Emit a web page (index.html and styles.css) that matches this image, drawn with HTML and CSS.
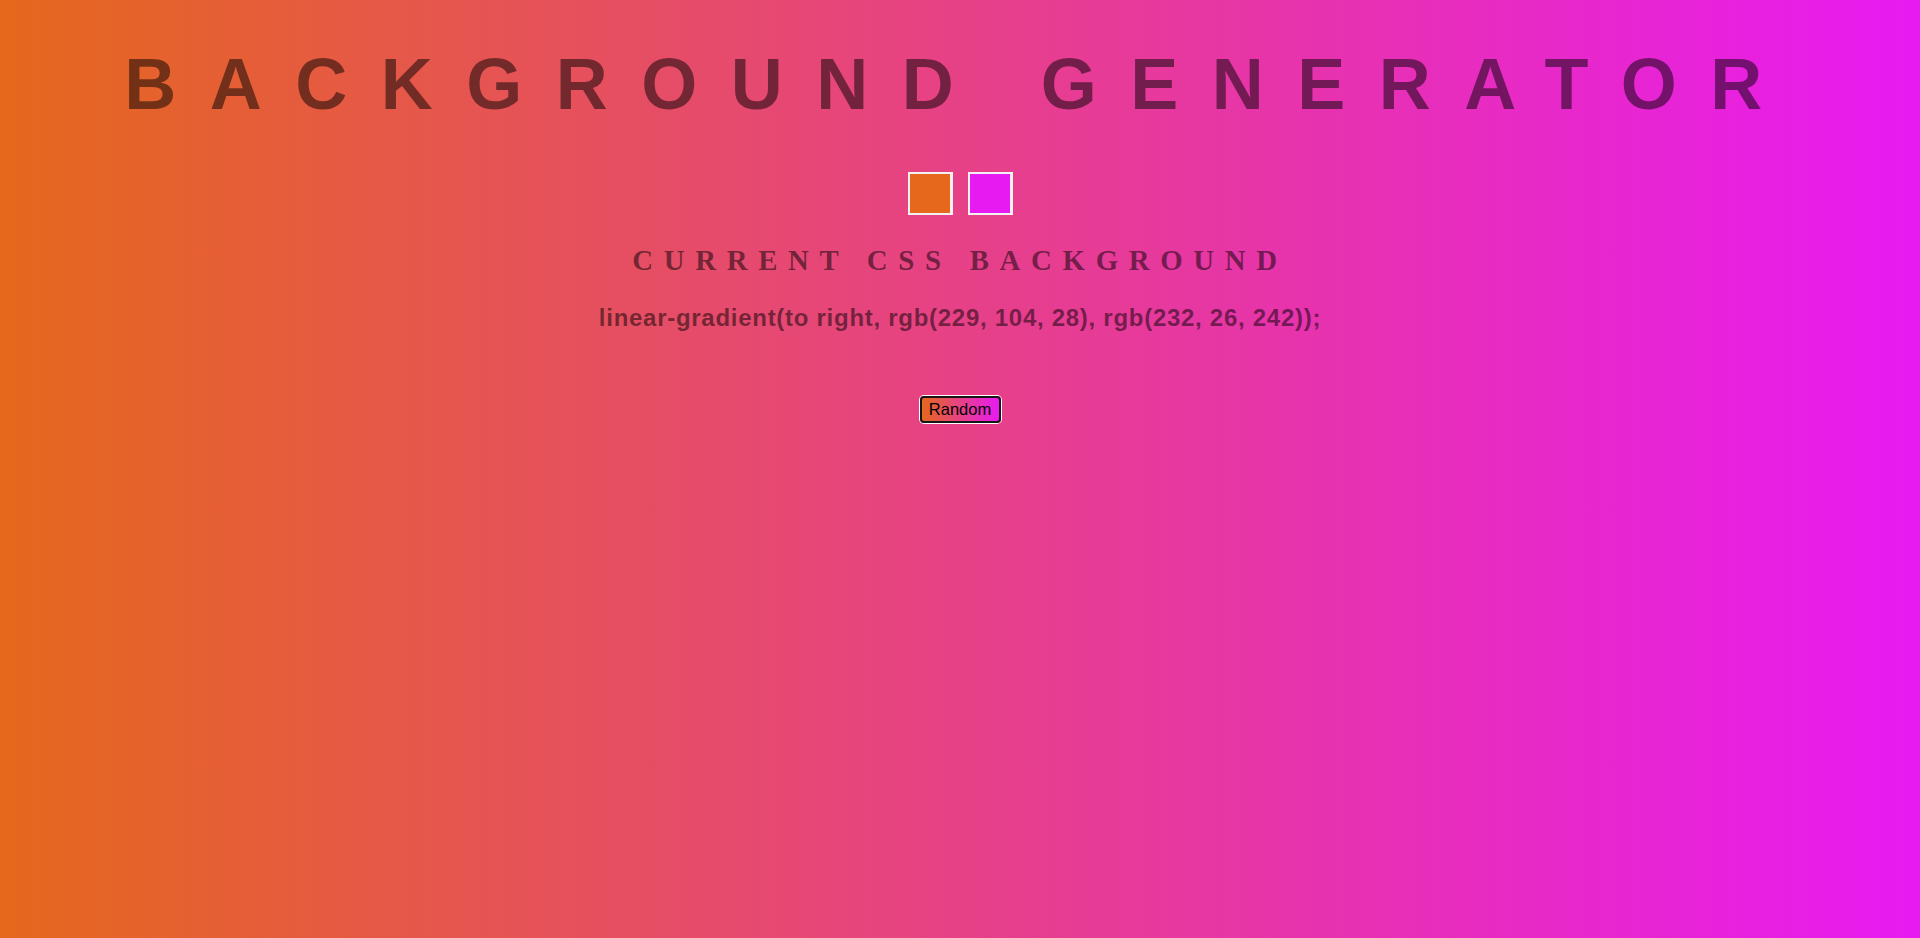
FILE: index.html
```html
<!DOCTYPE html>
<html lang="en">
<head>
<meta charset="utf-8">
<title>Background Generator</title>
<link rel="stylesheet" href="styles.css">
</head>
<body>
<main class="page">
  <h1 class="title">Background Generator</h1>
  <div class="pickers">
    <input class="picker" type="color" name="color1" value="#e5681c">
    <input class="picker" type="color" name="color2" value="#e81af2">
  </div>
  <h3 class="subtitle">Current CSS Background</h3>
  <p class="css-value">linear-gradient(to right, rgb(229, 104, 28), rgb(232, 26, 242));</p>
  <button class="random-btn" type="button">Random</button>
</main>
</body>
</html>
```
FILE: styles.css
```css
html {
  height: 100%;
}

body {
  margin: 0;
  min-height: 100%;
  background: linear-gradient(to right, rgb(229, 104, 28), rgb(232, 26, 242));
  color: rgba(0, 0, 0, 0.5);
  font-family: "Liberation Sans", Arial, sans-serif;
  text-align: center;
}

.page {
  display: flex;
  flex-direction: column;
  align-items: center;
  padding-top: 43px;
}

.title {
  margin: 0;
  font: 700 72px/83px "Liberation Sans", Arial, sans-serif;
  letter-spacing: 33.5px;
  text-transform: uppercase;
  white-space: nowrap;
}

.pickers {
  display: flex;
  gap: 15px;
  margin-top: 46px;
}

.picker {
  width: 45px;
  height: 43px;
  box-sizing: border-box;
  margin: 0;
  padding: 2px 3px 2px 2px;
  border: none;
  background: #f2f2f2;
}

.picker::-webkit-color-swatch-wrapper {
  padding: 0;
}

.picker::-webkit-color-swatch {
  border: none;
  border-radius: 0;
}

.subtitle {
  margin: 29px 0 0;
  font: 700 28.8px/33px "Liberation Serif", "Times New Roman", serif;
  letter-spacing: 10.7px;
  text-transform: uppercase;
  white-space: nowrap;
}

.css-value {
  margin: 26px 0 0;
  font: 700 24px/29px "Liberation Sans", Arial, sans-serif;
  letter-spacing: 0.72px;
  white-space: nowrap;
}

.random-btn {
  margin-top: 64px;
  width: 81px;
  height: 27px;
  box-sizing: border-box;
  padding: 0;
  border: 2px solid #151515;
  border-radius: 4px;
  box-shadow: 0 0 0 1px #ffffff;
  background: linear-gradient(to right, rgb(229, 104, 28), rgb(232, 26, 242));
  color: #000000;
  font: 400 16.5px/23px "Liberation Sans", Arial, sans-serif;
}
```
